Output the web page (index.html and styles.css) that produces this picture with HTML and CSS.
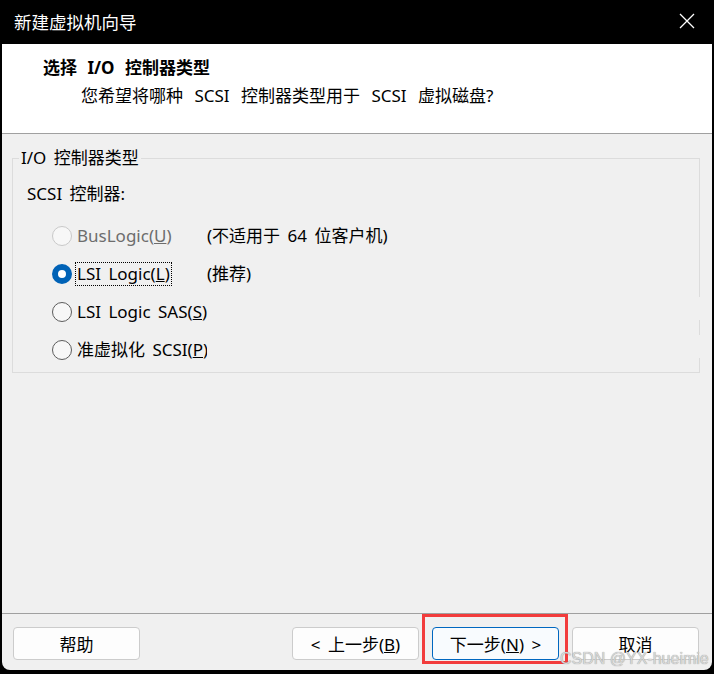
FILE: index.html
```html
<!DOCTYPE html>
<html lang="zh-CN">
<head>
<meta charset="utf-8">
<title>新建虚拟机向导</title>
<link rel="stylesheet" href="styles.css">
</head>
<body>
<div class="window">
  <div class="titlebar">
    <span class="title">新建虚拟机向导</span>
    <svg class="close" width="16" height="16" viewBox="0 0 16 16"><path d="M1 1 L15 15 M15 1 L1 15" stroke="#fff" stroke-width="1.3" fill="none"/></svg>
  </div>
  <div class="content">
    <div class="header">
      <div class="h-title">选择 I/O 控制器类型</div>
      <div class="h-sub">您希望将哪种 SCSI 控制器类型用于 SCSI 虚拟磁盘?</div>
    </div>
    <div class="body">
      <fieldset class="group">
        <legend class="legend">I/O 控制器类型</legend>
        <div class="group-label">SCSI 控制器:</div>
        <div class="options">
          <div class="row">
            <span class="radio disabled"></span>
            <span class="label disabled-text">BusLogic(<u>U</u>)</span>
            <span class="note">(不适用于 64 位客户机)</span>
          </div>
          <div class="row">
            <span class="radio checked"></span>
            <span class="label focus">LSI Logic(<u>L</u>)</span>
            <span class="note">(推荐)</span>
          </div>
          <div class="row wide">
            <span class="radio"></span>
            <span class="label">LSI Logic SAS(<u>S</u>)</span>
            <span class="note"></span>
          </div>
          <div class="row wide">
            <span class="radio"></span>
            <span class="label">准虚拟化 SCSI(<u>P</u>)</span>
            <span class="note"></span>
          </div>
        </div>
      </fieldset>
    </div>
    <div class="footer">
      <button class="btn">帮助</button>
      <div class="spacer"></div>
      <button class="btn">&lt; 上一步(<u>B</u>)</button>
      <button class="btn primary">下一步(<u>N</u>) &gt;</button>
      <button class="btn">取消</button>
      <div class="highlight"></div>
      <div class="watermark">CSDN @YX-hueimie</div>
    </div>
  </div>
</div>
</body>
</html>
```

FILE: styles.css
```css
html, body {
  margin: 0;
  padding: 0;
  background: #000;
}
body {
  font-family: "Noto Sans", "Noto Sans CJK SC", sans-serif;
  font-size: 17px;
  word-spacing: 3px;
  color: #000;
}
.window {
  width: 714px;
  height: 674px;
  box-sizing: border-box;
  padding: 0 2px 4px 2px;
  display: flex;
  flex-direction: column;
  background: #000;
}
.titlebar {
  height: 44px;
  flex: none;
  display: flex;
  align-items: center;
  justify-content: space-between;
  padding: 0 17px 0 12px;
}
.title {
  color: #fff;
  font-family: "Noto Sans CJK SC", sans-serif;
  font-size: 17.5px;
  line-height: 22px;
}
.close {
  display: block;
  margin-top: -2px;
}
.content {
  flex: 1;
  display: flex;
  flex-direction: column;
  background: #f0f0f0;
  border-radius: 0 0 8px 8px;
  position: relative;
}
.header {
  height: 90px;
  flex: none;
  background: #fff;
  border-bottom: 1px solid #a0a0a0;
  box-sizing: border-box;
  padding: 13px 0 0 41px;
}
.h-title {
  font-weight: 700;
  font-size: 17px;
  word-spacing: 6px;
  line-height: 22px;
}
.h-sub {
  font-size: 17px;
  word-spacing: 7px;
  line-height: 22px;
  padding-left: 38px;
  margin-top: 6px;
  white-space: nowrap;
}
.body {
  flex: 1;
  padding: 13px 12px 0 10px;
}
.group {
  margin: 0;
  padding: 0 0 3px 0;
  border: 1px solid #dcdcdc;
}
.legend {
  margin-left: 6px;
  padding: 0 2px;
  line-height: 22px;
}
.group-label {
  margin: 14px 0 0 14px;
  line-height: 22px;
}
.options {
  margin-top: 12px;
  padding-left: 39px;
}
.row {
  display: grid;
  grid-template-columns: 20px 135px 1fr;
  align-items: center;
  height: 38px;
}
.radio {
  width: 20px;
  height: 20px;
  box-sizing: border-box;
  border-radius: 50%;
  border: 1px solid #5c5c5c;
  background: #f7f7f7;
}
.radio.disabled {
  border-color: #c9c9c9;
  background: #f7f7f7;
}
.radio.checked {
  border: 6px solid #0062b6;
  background: #fff;
}
.label {
  justify-self: start;
  margin-left: 4px;
  padding: 0 1px;
  line-height: 22px;
  white-space: nowrap;
}
.label.focus {
  outline: 1px dotted #000;
}
.disabled-text {
  color: #6d6d6d;
}
.note {
  line-height: 22px;
  white-space: nowrap;
}
.row.wide .note {
  align-self: start;
  height: 23px;
  margin-top: 4px;
  margin-right: -2px;
  background: #f0f0f0;
}
.footer {
  flex: none;
  height: 57px;
  box-sizing: border-box;
  border-top: 1px solid #a0a0a0;
  padding: 13px 13px 10px 11px;
  display: flex;
  align-items: flex-start;
  gap: 13px;
  position: relative;
}
.spacer {
  flex: 1;
}
.btn {
  width: 127px;
  height: 33px;
  box-sizing: border-box;
  border: 1px solid #cccccc;
  border-radius: 4px;
  background: #fdfdfd;
  font-family: "Noto Sans", "Noto Sans CJK SC", sans-serif;
  font-size: 17px;
  word-spacing: 3px;
  color: #000;
  padding: 0;
}
.btn.primary {
  border-color: #0067c0;
  background: #f8fbfe;
}
.highlight {
  position: absolute;
  left: 420px;
  top: 0;
  width: 146px;
  height: 50px;
  box-sizing: border-box;
  border: 3px solid #f23c3c;
}
.watermark {
  position: absolute;
  left: 558px;
  top: 36px;
  font-family: "Liberation Sans", sans-serif;
  font-size: 16px;
  word-spacing: 0;
  line-height: 18px;
  color: #d8d8d8;
  text-shadow: 0 0 1px #808080;
}
```
